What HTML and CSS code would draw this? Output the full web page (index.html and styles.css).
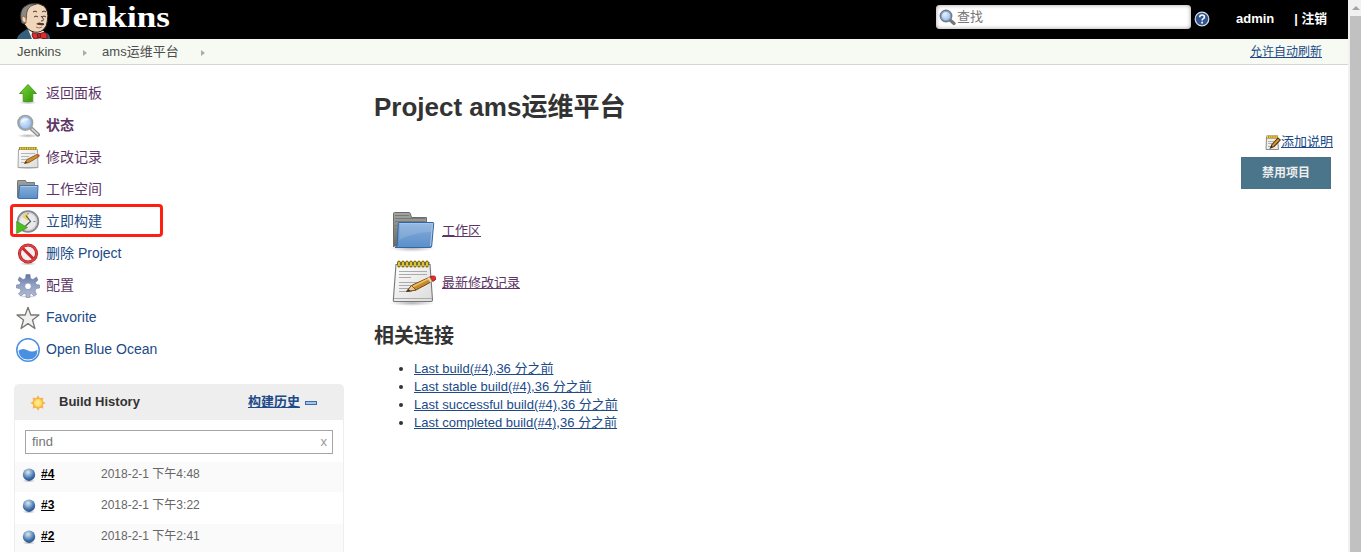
FILE: index.html
```html
<!DOCTYPE html>
<html lang="zh-CN">
<head>
<meta charset="utf-8">
<title>ams运维平台 [Jenkins]</title>
<link rel="stylesheet" href="styles.css">
</head>
<body>
<svg class="defs" width="0" height="0" aria-hidden="true">
  <defs>
    <linearGradient id="gFolder" x1="0" y1="0" x2="0" y2="1"><stop offset="0" stop-color="#86aedb"/><stop offset="1" stop-color="#5b8fc9"/></linearGradient>
    <linearGradient id="gBack" x1="0" y1="0" x2="0" y2="1"><stop offset="0" stop-color="#a3a5a1"/><stop offset="1" stop-color="#666864"/></linearGradient>
    <linearGradient id="gPaper" x1="0" y1="0" x2="1" y2="1"><stop offset="0" stop-color="#fdfdfd"/><stop offset="1" stop-color="#dcdcdc"/></linearGradient>
    <linearGradient id="gGreen" x1="0" y1="0" x2="1" y2="1"><stop offset="0" stop-color="#7cd836"/><stop offset="1" stop-color="#2f9208"/></linearGradient>
    <linearGradient id="gGear" x1="0" y1="0" x2="0" y2="1"><stop offset="0" stop-color="#6377a3"/><stop offset=".45" stop-color="#909fc4"/><stop offset="1" stop-color="#b3bbd2"/></linearGradient>
    <radialGradient id="gBall" cx=".42" cy=".3" r=".7"><stop offset="0" stop-color="#dfe8ec"/><stop offset=".35" stop-color="#8fb0cf"/><stop offset=".7" stop-color="#4274b0"/><stop offset="1" stop-color="#29508a"/></radialGradient>
    <radialGradient id="gSun"><stop offset="0" stop-color="#fff6a0"/><stop offset="1" stop-color="#fbd045"/></radialGradient>
    <radialGradient id="gLens" cx=".4" cy=".35"><stop offset="0" stop-color="#e6f1ff"/><stop offset="1" stop-color="#a3c6ef"/></radialGradient>
    <radialGradient id="gShade"><stop offset="0" stop-color="#000" stop-opacity=".3"/><stop offset="1" stop-color="#000" stop-opacity="0"/></radialGradient>
  </defs>
  <symbol id="folder" viewBox="0 0 48 48">
    <ellipse cx="24" cy="42" rx="23" ry="4" fill="url(#gShade)"/>
    <path d="M5.500 41V7.500Q5.500 6.500 6.500 6.500H21Q22 6.500 22.500 8L23.500 11.500H38.500V40H6Z" fill="url(#gBack)" stroke="#6b6d69"/>
    <path d="M7 9.500H21M7 12.500H37M7 15.500H37M7 19.500H9M7 23.500H9M7 27.500H9M7 31.500H9" stroke="#777975" stroke-width="1"/>
    <path d="M11 16.500H45Q45.800 16.500 45.700 17.500L43.700 40Q43.500 41.500 42 41.500H7Q9 41 9.200 39L10.300 17.500Q10.300 16.500 11 16.500Z" fill="url(#gFolder)" stroke="#3465a4"/>
    <path d="M12 18H44.200L43.500 26Q27 26 11.300 34Z" fill="#fff" opacity=".13"/>
    <path d="M11.500 17.700H44.500L42.500 40" fill="none" stroke="#b2cbe8" stroke-width=".9"/>
  </symbol>
  <symbol id="folder-small" viewBox="0 0 24 24">
    <path d="M1.500 19.500V3Q1.500 2.500 2 2.500H9.500L10.500 4.500H18.500V19Z" fill="url(#gBack)" stroke="#777975"/>
    <path d="M3.500 7.500H22L21.500 20.500H2.500Z" fill="url(#gFolder)" stroke="#3f71ad"/>
    <path d="M4.500 8.500H21" stroke="#a9c6e7"/>
  </symbol>
  <symbol id="note" viewBox="0 0 48 48">
    <ellipse cx="24" cy="45" rx="23" ry="3" fill="url(#gShade)"/>
    <path d="M8 6.500H42L44.500 42Q44.500 43.500 43 43.500H6.500Q5.200 43.500 5.300 42Z" fill="url(#gPaper)" stroke="#777" stroke-width="1.100"/>
    <path d="M6 40.500H44" stroke="#aaa" stroke-width="1.200"/>
    <path d="M9 5.500H41.500" stroke="#666" stroke-width="3"/>
    <path d="M11 8V4M15 8V4M19 8V4M23 8V4M27 8V4M31 8V4M35 8V4M39 8V4" stroke="#826c08" stroke-width="3.200" stroke-linecap="round"/>
    <path d="M11 7.500V4.500M15 7.500V4.500M19 7.500V4.500M23 7.500V4.500M27 7.500V4.500M31 7.500V4.500M35 7.500V4.500M39 7.500V4.500" stroke="#f1dc43" stroke-width="1.600" stroke-linecap="round"/>
    <path d="M11 13.500H39M11 16.500H39M11 19.500H23M11 24.500H39M11 27.500H35M11 30.500H28M11 33.500H24" stroke="#a9abab" stroke-width="1"/>
    <path d="M18.500 33.500L23.500 27.500L43 18.500Q47 18 47.500 21.500L28 32Z" fill="#c98a2b" stroke="#70450d" stroke-width="1"/>
    <path d="M24.500 28.700L42 20" stroke="#edc166" stroke-width="1.800"/>
    <path d="M18.500 33.500L23.500 27.500L28 32Z" fill="#e7c999" stroke="#70450d" stroke-width=".8"/><path d="M18.300 33.800L20.400 31L22.500 33Z" fill="#333"/>
    <path d="M42.200 18.600Q46.800 16.800 48 19.500Q48.200 22 45.200 23.300Z" fill="#e82c34" stroke="#9d1820" stroke-width=".7"/>
    <path d="M40.300 19.600L43.200 24.200" stroke="#ddd" stroke-width="1.600"/>
  </symbol>
  <symbol id="note-small" viewBox="0 0 24 24">
    <ellipse cx="12" cy="22" rx="11.500" ry="1.500" fill="url(#gShade)"/>
    <path d="M2.500 3.500H21.500L22 21.500H2Z" fill="url(#gPaper)" stroke="#a3a5a3"/>
    <path d="M3 2.500H21" stroke="#9c8729" stroke-width="3"/>
    <path d="M4 2.500H21" stroke="#eddb4a" stroke-width="2" stroke-dasharray="1.300 1"/>
    <path d="M5 7.500H19M5 10.500H13M5 13.500H11M5 16.500H9" stroke="#b5b7b5"/>
    <path d="M8.500 17.500L11 13.500L21 8.500L23 10.500L13 16.500Z" fill="#d18f2c" stroke="#865518" stroke-width=".9"/>
    <path d="M8.500 17.500L10 15.200L11.300 16.600Z" fill="#333"/>
    <path d="M21 8.500Q23.700 7.500 23.700 9.700L22.500 11Z" fill="#dc3535"/>
  </symbol>
  <symbol id="note-edit" viewBox="0 0 16 16">
    <path d="M1.500 2.500H12.500L13.500 14.500H1Z" fill="#eee" stroke="#8b8d89"/>
    <path d="M1.500 2H13" stroke="#806714" stroke-width="3"/>
    <path d="M2 2H13" stroke="#f3d63a" stroke-width="2" stroke-dasharray="1.400 .7"/>
    <path d="M3 6.500H9M3 8.500H7M3 11.500H6" stroke="#b1b3b1"/>
    <path d="M5.500 13L7 9.500L13 3L15.300 5L9 11.500Z" fill="#dd9c32" stroke="#513711" stroke-width="1.100"/>
    <path d="M5.500 13L6.500 10.800L7.700 12Z" fill="#222"/>
  </symbol>
  <symbol id="lens" viewBox="0 0 24 24">
    <ellipse cx="12" cy="21.800" rx="11" ry="2" fill="url(#gShade)"/>
    <path d="M15 14.300L22 20.700" stroke="#8b8d89" stroke-width="4" stroke-linecap="round"/>
    <path d="M16 15.200L21.700 20.300" stroke="#d5d6d3" stroke-width="1.700" stroke-linecap="round"/>
    <circle cx="9.300" cy="8.800" r="7.300" fill="url(#gLens)" stroke="#a0a2a0" stroke-width="1.700"/>
    <circle cx="9.300" cy="8.800" r="6" fill="none" stroke="#7c9fc8" stroke-width=".7"/>
    <path d="M5.200 9Q5 5 9 4.400Q12 4.200 13 6Q8 6 5.200 9Z" fill="#fff" opacity=".65"/>
  </symbol>
  <symbol id="lens-small" viewBox="0 0 17 17">
    <path d="M11 11L15 14.500" stroke="#747674" stroke-width="3.200" stroke-linecap="round"/>
    <circle cx="7" cy="7" r="5.700" fill="url(#gLens)" stroke="#777a7d" stroke-width="1.500"/>
    <circle cx="7" cy="7" r="4.600" fill="none" stroke="#6f9bd0" stroke-width=".8"/>
  </symbol>
  <symbol id="ball" viewBox="0 0 14 15">
    <ellipse cx="7" cy="12.800" rx="6.500" ry="1.800" fill="url(#gShade)"/><circle cx="7" cy="6.700" r="6.200" fill="url(#gBall)"/>
  </symbol>
</svg>

<div class="window">
  <div class="page">
    <header class="header">
      <a class="brand">
        <svg width="156" height="39" viewBox="0 0 156 39">
          <path d="M1 39Q2 35 5 33L11 29L17 34H26L31 33Q34 35 34 39Z" fill="#33617c"/>
          <path d="M11 27L16 39H26L28 31Z" fill="#f4f3ef"/>
          <path d="M7 16Q6 23 9 25Q11 29 15 31Q22 34 27 30Q31 27 31.500 20Q33 11 28 6Q23 2.500 16 4Q8 6 7 16Z" fill="#f0d6bb" stroke="#27211d" stroke-width="1"/>
          <path d="M5 20Q3.500 11 8 7Q13 2.500 20 4Q13 6 12 9Q10 13 10.500 17L9 24Q5 24 5 20Z" fill="#8b8882" stroke="#3b3732" stroke-width=".7"/>
          <path d="M8 16Q5 16 6 20Q7 23 10 23Q11 18 8 16Z" fill="#f0d6bb" stroke="#6a4a37" stroke-width=".7"/>
          <path d="M17 12Q19 10 21 12M26 12Q28 10 30 12M18 17Q20 15 22 17M26 17Q28 15 30 17M25 16Q30 21 25 21" fill="none" stroke="#49372d" stroke-width="1"/>
          <path d="M20 24Q23 21.500 25 23Q29 22.500 28 25Q24 26 20 24Z" fill="#4a3b33"/>
          <path d="M20 27Q23 29 26 27" fill="none" stroke="#a86d56"/>
          <path d="M16.500 32.500L22 34L29 32Q32 34 31 39L24 38L18 39Q15 36 16.500 32.500Z" fill="#e02b2d" stroke="#411014" stroke-width=".7"/>
          <path d="M21.500 33.500H24.500V37.500H21.500Z" fill="#c41b22" stroke="#411014" stroke-width=".6"/>
          <text class="wordmark" x="39" y="27" textLength="115" lengthAdjust="spacingAndGlyphs">Jenkins</text>
        </svg>
      </a>
      <div class="search"><svg width="17" height="17"><use href="#lens-small"/></svg><span>查找</span></div>
      <svg class="help" width="16" height="16" viewBox="0 0 16 16"><circle cx="8" cy="8" r="6.800" fill="#33568f" stroke="#d6dde8" stroke-width="1.200"/><path d="M5.700 6.200Q5.700 4 8 4Q10.400 4 10.400 6Q10.400 7.200 9 7.900Q8.100 8.400 8.100 9.500" fill="none" stroke="#fff" stroke-width="1.600"/><path d="M7.200 10.700H9V12.400H7.200Z" fill="#fff"/></svg>
      <div class="login"><b>admin</b><b class="logout">| 注销</b></div>
    </header>
    <nav class="crumbs">
      <span>Jenkins</span><i class="caret"></i><span>ams运维平台</span><i class="caret"></i>
      <a class="refresh">允许自动刷新</a>
    </nav>
    <div class="body">
      <aside class="side">
        <ul class="tasks">
          <li><svg width="24" height="24" viewBox="0 0 24 24"><ellipse cx="12" cy="20.500" rx="9" ry="2" fill="url(#gShade)"/><path d="M12 2.500L20.500 11.500H16.800V19.500H7.200V11.500H3.500Z" fill="url(#gGreen)" stroke="#4a9a24"/></svg><a class="visited">返回面板</a></li>
          <li><svg width="24" height="24"><use href="#lens"/></svg><a class="visited current">状态</a></li>
          <li><svg width="24" height="24"><use href="#note-small"/></svg><a class="visited">修改记录</a></li>
          <li><svg width="24" height="24"><use href="#folder-small"/></svg><a class="visited">工作空间</a></li>
          <li class="marked"><svg width="24" height="24" viewBox="0 0 24 24"><circle cx="12" cy="11.500" r="10.300" fill="#e9e9ea" stroke="#85888f" stroke-width="1.800"/><circle cx="12" cy="11.500" r="8.800" fill="none" stroke="#c4c6cc"/><path d="M12 11L6 7Q8 3.500 12 3.300Z" fill="#edd36b"/><path d="M10 5.500L14.500 11.500L9.500 16" fill="none" stroke="#555" stroke-width="1.200"/><path d="M19.500 11.500H17.500M12 3V4.500" stroke="#777"/><path d="M.7 11.500L11.500 17.500L.7 23.500Z" fill="#4dbb22" stroke="#3c9a1d" stroke-width=".8"/></svg><a>立即构建</a></li>
          <li><svg width="24" height="24" viewBox="0 0 24 24"><ellipse cx="12" cy="21.800" rx="9" ry="1.500" fill="url(#gShade)"/><circle cx="12" cy="11.500" r="8.500" fill="#f4f0f0" stroke="#b51d20" stroke-width="3"/><path d="M6 5.500L18 17.500" stroke="#c92b2e" stroke-width="3"/><circle cx="12" cy="11.500" r="8.500" fill="none" stroke="#dc4144" stroke-width="1.800"/></svg><a>删除 Project</a></li>
          <li><svg width="24" height="24" viewBox="0 0 24 24"><ellipse cx="12" cy="22.500" rx="9" ry="1.500" fill="url(#gShade)"/><path fill="url(#gGear)" stroke="#7482a8" stroke-width=".6" fill-rule="evenodd" d="M10 .5H14L14.500 4.500L17 5.500L20.500 3L22 6L19.500 8.500L20 10.500L23.600 11V14L20 14.500L19 17L20.500 20.500L18 22L15.500 19.500L14 20L13.500 23.500H10.500L10 20L8 19.500L5 22L2.500 20L5 17L4 14.500L.5 14V11L4 10.500L4.500 8.500L2 6L3.500 3L7 5.500L9.500 4.500ZM12 9A3.300 3.300 0 1 0 12 15.600A3.300 3.300 0 1 0 12 9Z"/></svg><a class="visited">配置</a></li>
          <li><svg width="24" height="24" viewBox="0 0 24 24"><path d="M12 1.300L14.800 9H23L16.500 14L18.900 22.500L12 17.600L5.100 22.500L7.500 14L1 9H9.200Z" fill="#f1f1f0" stroke="#777975" stroke-width="1.300" stroke-linejoin="round"/></svg><a>Favorite</a></li>
          <li><svg width="24" height="24" viewBox="0 0 24 24"><circle cx="12" cy="12" r="11.200" fill="#fff" stroke="#4a90e2" stroke-width="1.500"/><path d="M2.500 12.500Q7 9.500 12 12.500Q16 15 21.500 11.700Q21.500 21.500 12 21.500Q3 21.500 2.500 12.500Z" fill="#4a90e2"/></svg><a>Open Blue Ocean</a></li>
        </ul>
        <section class="history">
          <div class="history-head">
            <svg width="16" height="16" viewBox="0 0 16 16"><path d="M8 .3L9.800 3.300L13.400 2.600L12.700 6.200L15.700 8L12.700 9.800L13.400 13.400L9.800 12.700L8 15.700L6.200 12.700L2.600 13.400L3.300 9.800L.3 8L3.300 6.200L2.600 2.600L6.200 3.300Z" fill="#f7b257"/><circle cx="8" cy="8" r="4.700" fill="url(#gSun)" stroke="#f4ab45" stroke-width=".8"/></svg>
            <b>Build History</b><a>构建历史</a><i class="collapse"></i>
          </div>
          <div class="find"><span>find</span><span class="clear">x</span></div>
          <ul class="builds">
            <li><svg class="ball" width="14" height="15"><use href="#ball"/></svg><a>#4</a><span>2018-2-1 下午4:48</span></li>
            <li><svg class="ball" width="14" height="15"><use href="#ball"/></svg><a>#3</a><span>2018-2-1 下午3:22</span></li>
            <li><svg class="ball" width="14" height="15"><use href="#ball"/></svg><a>#2</a><span>2018-2-1 下午2:41</span></li>
          </ul>
        </section>
      </aside>
      <main class="main">
        <h1>Project ams运维平台</h1>
        <div class="actions">
          <div class="describe"><svg width="16" height="16"><use href="#note-edit"/></svg><a>添加说明</a></div>
          <button class="disable">禁用项目</button>
        </div>
        <div class="shortcuts">
          <div><svg width="48" height="48"><use href="#folder"/></svg><a>工作区</a></div>
          <div><svg width="48" height="48"><use href="#note"/></svg><a>最新修改记录</a></div>
        </div>
        <h2>相关连接</h2>
        <ul class="permalinks">
          <li><a>Last build(#4),36 分之前</a></li>
          <li><a>Last stable build(#4),36 分之前</a></li>
          <li><a>Last successful build(#4),36 分之前</a></li>
          <li><a>Last completed build(#4),36 分之前</a></li>
        </ul>
      </main>
    </div>
  </div>
  <div class="scrollbar"><i class="up"></i><div class="thumb"></div></div>
</div>
</body>
</html>
```
FILE: styles.css
```css
* { box-sizing: border-box; }
body {
  margin: 0;
  overflow: hidden;
  background: #fff;
  color: #333;
  font: 13px/18px "Liberation Sans", "Noto Sans CJK SC", sans-serif;
}
ul, h1, h2 { margin: 0; padding: 0; }
svg { display: block; flex: none; }
.defs { position: absolute; }
a { color: #204a87; }
.window { display: flex; height: 552px; overflow: hidden; }
.page { width: 1348px; flex: none; }

.header { display: flex; height: 39px; background: #000; color: #fff; }
.brand { margin-left: 16px; }
.wordmark { font: bold 30px "Liberation Serif", serif; fill: #fff; }
.search {
  display: flex;
  align-items: center;
  gap: 1px;
  width: 255px;
  height: 24px;
  margin: 5px 0 0 764px;
  padding-left: 3px;
  border-radius: 4px;
  background: #fff;
  box-shadow: inset 0 0 4px #999;
  color: #757575;
}
.help { margin: 11px 0 0 3px; }
.login { display: flex; gap: 20px; margin: 10px 0 0 26px; }
.logout { font-size: 12.8px; }

.crumbs {
  display: flex;
  align-items: center;
  height: 26px;
  padding: 0 26px 0 17px;
  border-bottom: 1px solid #d3d7cf;
  background: #f6faf2;
  color: #4d4d4d;
}
.caret { margin: 2px 15px 0 22px; border: solid transparent; border-width: 3.5px 0 3.5px 4px; border-left-color: #aaa; }
.refresh { margin-left: auto; font-size: 12px; text-decoration: underline; }

.body { display: flex; }
.side { width: 344px; flex: none; padding-top: 12px; }
.tasks { list-style: none; font-size: 14px; }
.tasks li { display: flex; align-items: center; gap: 6px; height: 32px; padding-left: 16px; }
.tasks svg { margin-top: 2px; }
.tasks .marked {
  width: 153px;
  height: 33px;
  margin: -1px 0 0 10px;
  padding: 0 0 0 3px;
  border: 3px solid #ff1e12;
  border-radius: 4px;
}
.visited { color: #5c3566; }
.current { font-weight: bold; }

.history { width: 330px; margin: 19px 0 0 14px; border: 1px solid #eee; border-radius: 5px 5px 0 0; }
.history-head { display: flex; align-items: center; height: 35px; padding: 0 26px 1px 15px; background: #eee; }
.history-head svg { margin: 1px 13px 0 0; }
.history-head a { margin-left: auto; font-weight: bold; text-decoration: underline; }
.collapse { width: 12px; height: 4px; margin: 2px 0 0 5px; border: 1px solid #3c6ba5; background: #a3c4ec; }
.find {
  display: flex;
  justify-content: space-between;
  height: 24px;
  margin: 10px 10px 8px;
  padding: 2px 5px 0 6px;
  border: 1px solid #a5a5a5;
  color: #757575;
}
.clear { color: #999; }
.builds { list-style: none; }
.builds li { display: flex; height: 31px; padding: 3px 0 0 7px; border-bottom: 1px solid #fff; font-size: 12px; }
.builds li:nth-child(odd) { background: #fafafa; }
.ball { margin: 3px 5px 0 0; }
.builds a { width: 60px; color: #000; font-weight: bold; text-decoration: underline; }
.builds span { color: #666; }

.main { flex: 1; padding: 25px 15px 0 30px; }
h1 { font-size: 26px; line-height: 34px; }
.actions { display: flex; flex-direction: column; align-items: flex-end; margin-top: 9px; }
.describe { display: flex; height: 24px; }
.describe svg { margin-top: 2px; }
.main a { text-decoration: underline; }
.disable {
  width: 90px;
  height: 32px;
  margin-right: 2px;
  padding: 0 0 3px;
  border: 1px solid #4a7186;
  background: #4b758b;
  color: #eee;
  font: bold 12px "Liberation Sans", "Noto Sans CJK SC", sans-serif;
}
.shortcuts { display: flex; flex-direction: column; gap: 4px; margin: 17px 0 0 14px; }
.shortcuts div { display: flex; align-items: center; gap: 6px; }
.shortcuts a { margin-top: 1px; color: #5c3566; }
h2 { margin-top: 17px; font-size: 20px; line-height: 26px; }
.permalinks { margin-top: 11px; padding-left: 40px; }

.scrollbar { flex: 1; padding-left: 2px; background: #f1f1f1; overflow: hidden; }
.up { display: block; width: 0; margin: 6px 0 6px 2px; border: solid transparent; border-width: 0 4px 4px; border-bottom-color: #a3a3a3; }
.thumb { height: 536px; background: #c1c1c1; }
```
